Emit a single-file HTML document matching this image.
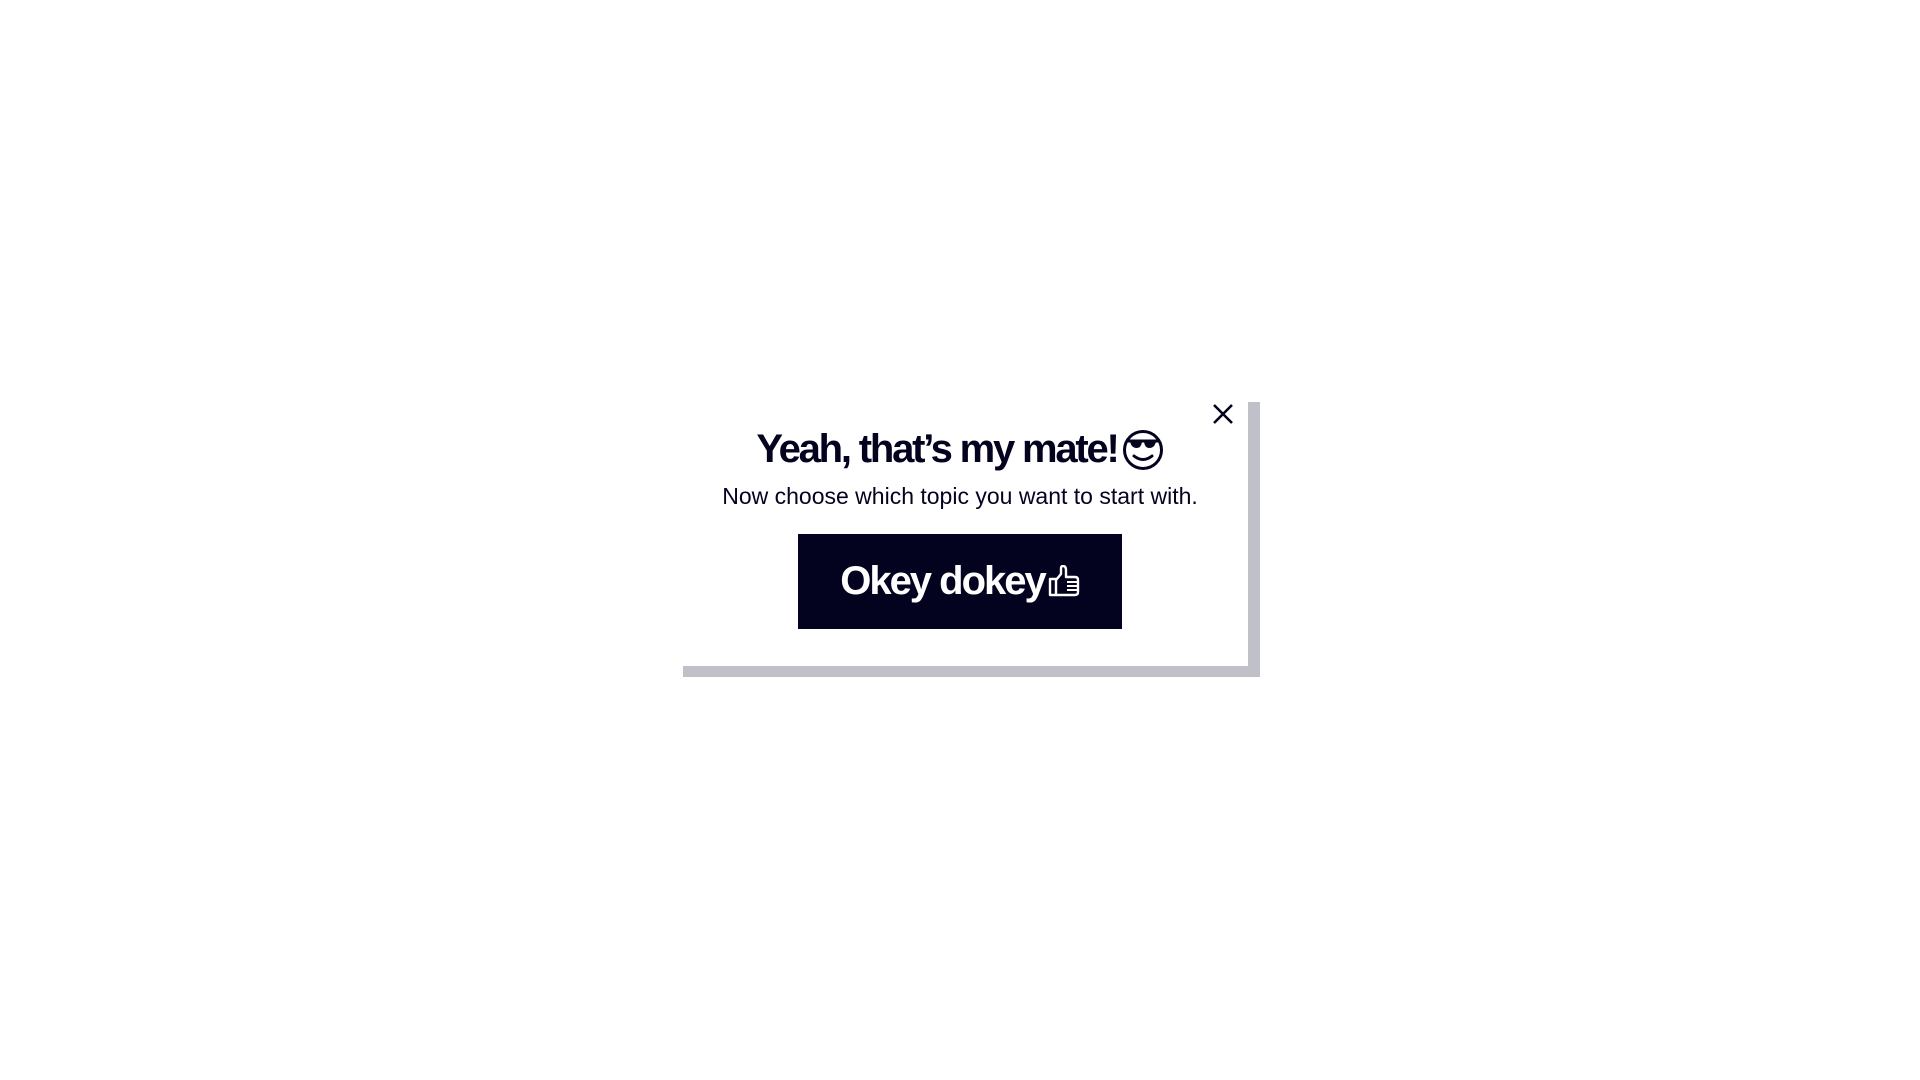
<!DOCTYPE html>
<html><head><meta charset="utf-8"><style>
html,body{margin:0;padding:0;width:1920px;height:1080px;background:#fff;overflow:hidden;font-family:"Liberation Sans",sans-serif;color:#03021f}
.shadow{position:absolute;left:683px;top:402px;width:577px;height:275px;background:#c0c0c8}
.modal{position:absolute;left:671px;top:390px;width:577px;height:276px;background:#fff}
.close{position:absolute;left:1212px;top:403px}
h1{position:absolute;left:0;width:1920px;top:424px;margin:0;text-align:center;font-size:40px;font-weight:900;letter-spacing:-2.2px;line-height:50px;white-space:nowrap}
h1 svg{vertical-align:-9px;margin-left:4px}
p{position:absolute;left:0;width:1920px;top:481px;margin:0;text-align:center;font-size:23px;line-height:30px}
.btn{position:absolute;left:798px;top:534px;width:324px;height:95px;background:#03021f;color:#fff;text-align:center;font-weight:900;font-size:40px;line-height:95px;letter-spacing:-2px;white-space:nowrap}
.btn svg{vertical-align:-3px;margin-left:3px}
</style></head><body>
<div class="shadow"></div>
<div class="modal"></div>
<svg class="close" width="22" height="22" viewBox="0 0 22 22"><path d="M2 2L20 20M20 2L2 20" stroke="#03021f" stroke-width="2.6"/></svg>
<h1>Yeah, that’s my mate!<svg width="42" height="42" viewBox="0 0 42 42"><circle cx="21" cy="21" r="18.5" fill="none" stroke="#03021f" stroke-width="3"/><path d="M5 12H37" stroke="#03021f" stroke-width="3"/><path d="M8 12Q9 19 15 19Q19 19 20 13M22 13Q23 19 27 19Q33 19 34 12" fill="#03021f"/><path d="M12 27Q21 34 30 27" fill="none" stroke="#03021f" stroke-width="3" stroke-linecap="round"/></svg></h1>
<p>Now choose which topic you want to start with.</p>
<div class="btn">Okey dokey<svg width="32" height="32" viewBox="0 0 32 32"><path d="M2 14H8V30H2Z M8 15L13 9V3Q13 1 15 1Q18 1 18 5V12H27Q30 12 30 15V27Q30 30 27 30H8" fill="none" stroke="#fff" stroke-width="2.4" stroke-linejoin="round"/><path d="M19 17H30M19 21H30M19 25H30" stroke="#fff" stroke-width="2"/></svg></div>
</body></html>
